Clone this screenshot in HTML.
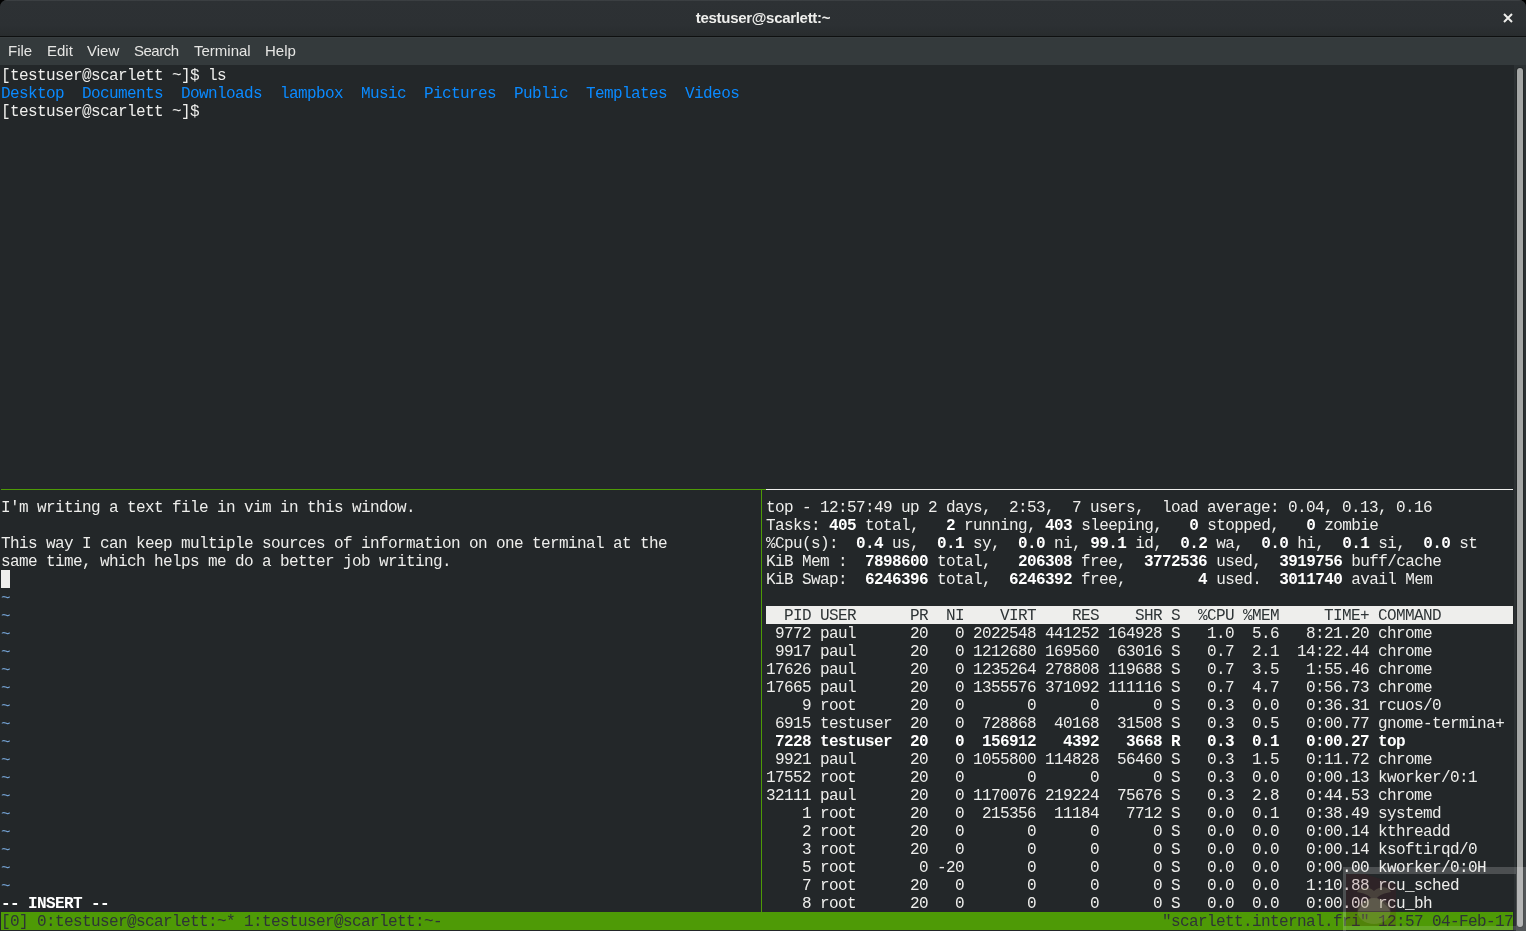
<!DOCTYPE html>
<html><head><meta charset="utf-8"><title>testuser@scarlett:~</title>
<style>
html,body{margin:0;padding:0;width:1526px;height:931px;overflow:hidden;background:#000;}
#win{will-change:transform;position:absolute;left:0;top:0;width:1526px;height:931px;background:#232729;border-radius:7px 7px 0 0;overflow:hidden}
#title{position:absolute;left:0;top:0;width:1526px;height:36px;background:linear-gradient(to bottom,#2d3134 0%,#2c3033 70%,#282c2e 100%);box-shadow:inset 0 1px rgba(255,255,255,0.07)}
#ttext{position:absolute;left:0;top:0;width:1526px;height:36px;font:bold 15px/36px "Liberation Sans",sans-serif;letter-spacing:-0.3px;text-align:center;color:#eeeeec}
#close{position:absolute;left:1501px;top:11px;width:14px;height:14px}
#tline{position:absolute;left:0;top:36px;width:1526px;height:1px;background:#0e1010}
#menu{position:absolute;left:0;top:37px;width:1526px;height:28px;background:#343a3c;box-shadow:inset 0 1px rgba(255,255,255,0.025)}
.m{position:absolute;top:0;height:28px;font:15px/28px "Liberation Sans",sans-serif;color:#e6e6e4}
#term{position:absolute;left:0;top:65px;width:1514px;height:866px;background:#232729}
#sb{position:absolute;left:1514px;top:65px;width:12px;height:866px;background:#2c3133}
#slider{position:absolute;left:1517px;top:68px;width:6px;height:859px;background:#a4a6a5;border-radius:3px;box-shadow:0 0 0 1px rgba(0,0,0,0.2)}
.r{position:absolute;height:17px;padding-top:1px;font:16px/18px "Liberation Mono",monospace;letter-spacing:-0.6px;white-space:pre;color:#eeeeec}
.r b,.bd{font-weight:bold;color:#ffffff}
.b{color:#0a8aff}
.tl{color:#729fcf;margin-top:1px}
.inv{background:#eeeeec;color:#2e3436}
.st{color:#2e3436}
#status{position:absolute;left:1px;top:912px;width:1512px;height:18px;background:#4e9a06}
#hl{position:absolute;left:1px;top:489px;width:765px;height:1px;background:#4e9a06}
#hr{position:absolute;left:766px;top:489px;width:747px;height:1px;background:#eeeeec}
#vl{position:absolute;left:761px;top:489px;width:1px;height:423px;background:#4e9a06}
#cur{position:absolute;left:1px;top:570px;width:9px;height:18px;background:#eeeeec}
#ov{position:absolute;left:1343px;top:867px;width:183px;height:64px;border-style:solid;border-color:rgba(255,255,255,0.19);border-width:7px 10px 1px 3px;box-sizing:border-box;border-bottom:0}
#ovb{position:absolute;left:1346px;top:926px;width:170px;height:4px;background:rgba(255,255,255,0.13)}
#logo{position:absolute;left:1340px;top:866px;width:60px;height:65px}

</style></head><body>
<div id="win">
<div id="title"><div id="ttext">testuser@scarlett:~</div>
<svg id="close" viewBox="0 0 14 14"><path d="M3 3L11 11M11 3L3 11" stroke="#eeeeec" stroke-width="2" stroke-linecap="butt"/></svg>
</div>
<div id="tline"></div>
<div id="menu">
<div class="m" style="left:8px">File</div>
<div class="m" style="left:47px">Edit</div>
<div class="m" style="left:87px">View</div>
<div class="m" style="left:134px;letter-spacing:-0.5px">Search</div>
<div class="m" style="left:194px">Terminal</div>
<div class="m" style="left:265px">Help</div>
</div>
<div id="term"></div>
<div id="sb"></div><div id="slider"></div>
<div id="status"></div>
<div id="hl"></div><div id="hr"></div><div id="vl"></div>
<div id="cur"></div>
<div class="r t" style="top:66px;left:1px">[testuser@scarlett ~]$ ls</div>
<div class="r b" style="top:84px;left:1px">Desktop  Documents  Downloads  lampbox  Music  Pictures  Public  Templates  Videos</div>
<div class="r t" style="top:102px;left:1px">[testuser@scarlett ~]$ </div>
<div class="r t" style="top:498px;left:1px">I'm writing a text file in vim in this window.</div>
<div class="r t" style="top:534px;left:1px">This way I can keep multiple sources of information on one terminal at the</div>
<div class="r t" style="top:552px;left:1px">same time, which helps me do a better job writing.</div>
<div class="r tl" style="top:588px;left:1px">~</div>
<div class="r tl" style="top:606px;left:1px">~</div>
<div class="r tl" style="top:624px;left:1px">~</div>
<div class="r tl" style="top:642px;left:1px">~</div>
<div class="r tl" style="top:660px;left:1px">~</div>
<div class="r tl" style="top:678px;left:1px">~</div>
<div class="r tl" style="top:696px;left:1px">~</div>
<div class="r tl" style="top:714px;left:1px">~</div>
<div class="r tl" style="top:732px;left:1px">~</div>
<div class="r tl" style="top:750px;left:1px">~</div>
<div class="r tl" style="top:768px;left:1px">~</div>
<div class="r tl" style="top:786px;left:1px">~</div>
<div class="r tl" style="top:804px;left:1px">~</div>
<div class="r tl" style="top:822px;left:1px">~</div>
<div class="r tl" style="top:840px;left:1px">~</div>
<div class="r tl" style="top:858px;left:1px">~</div>
<div class="r tl" style="top:876px;left:1px">~</div>
<div class="r bd" style="top:894px;left:1px">-- INSERT --</div>
<div class="r t" style="top:498px;left:766px">top - 12:57:49 up 2 days,  2:53,  7 users,  load average: 0.04, 0.13, 0.16</div>
<div class="r t" style="top:516px;left:766px">Tasks: <b>405</b> total,   <b>2</b> running, <b>403</b> sleeping,   <b>0</b> stopped,   <b>0</b> zombie</div>
<div class="r t" style="top:534px;left:766px">%Cpu(s):  <b>0.4</b> us,  <b>0.1</b> sy,  <b>0.0</b> ni, <b>99.1</b> id,  <b>0.2</b> wa,  <b>0.0</b> hi,  <b>0.1</b> si,  <b>0.0</b> st</div>
<div class="r t" style="top:552px;left:766px">KiB Mem :  <b>7898600</b> total,   <b>206308</b> free,  <b>3772536</b> used,  <b>3919756</b> buff/cache</div>
<div class="r t" style="top:570px;left:766px">KiB Swap:  <b>6246396</b> total,  <b>6246392</b> free,        <b>4</b> used.  <b>3011740</b> avail Mem</div>
<div class="r inv" style="top:606px;left:766px">  PID USER      PR  NI    VIRT    RES    SHR S  %CPU %MEM     TIME+ COMMAND        </div>
<div class="r t" style="top:624px;left:766px"> 9772 paul      20   0 2022548 441252 164928 S   1.0  5.6   8:21.20 chrome</div>
<div class="r t" style="top:642px;left:766px"> 9917 paul      20   0 1212680 169560  63016 S   0.7  2.1  14:22.44 chrome</div>
<div class="r t" style="top:660px;left:766px">17626 paul      20   0 1235264 278808 119688 S   0.7  3.5   1:55.46 chrome</div>
<div class="r t" style="top:678px;left:766px">17665 paul      20   0 1355576 371092 111116 S   0.7  4.7   0:56.73 chrome</div>
<div class="r t" style="top:696px;left:766px">    9 root      20   0       0      0      0 S   0.3  0.0   0:36.31 rcuos/0</div>
<div class="r t" style="top:714px;left:766px"> 6915 testuser  20   0  728868  40168  31508 S   0.3  0.5   0:00.77 gnome-termina+</div>
<div class="r bd" style="top:732px;left:766px"> 7228 testuser  20   0  156912   4392   3668 R   0.3  0.1   0:00.27 top</div>
<div class="r t" style="top:750px;left:766px"> 9921 paul      20   0 1055800 114828  56460 S   0.3  1.5   0:11.72 chrome</div>
<div class="r t" style="top:768px;left:766px">17552 root      20   0       0      0      0 S   0.3  0.0   0:00.13 kworker/0:1</div>
<div class="r t" style="top:786px;left:766px">32111 paul      20   0 1170076 219224  75676 S   0.3  2.8   0:44.53 chrome</div>
<div class="r t" style="top:804px;left:766px">    1 root      20   0  215356  11184   7712 S   0.0  0.1   0:38.49 systemd</div>
<div class="r t" style="top:822px;left:766px">    2 root      20   0       0      0      0 S   0.0  0.0   0:00.14 kthreadd</div>
<div class="r t" style="top:840px;left:766px">    3 root      20   0       0      0      0 S   0.0  0.0   0:00.14 ksoftirqd/0</div>
<div class="r t" style="top:858px;left:766px">    5 root       0 -20       0      0      0 S   0.0  0.0   0:00.00 kworker/0:0H</div>
<div class="r t" style="top:876px;left:766px">    7 root      20   0       0      0      0 S   0.0  0.0   1:10.88 rcu_sched</div>
<div class="r t" style="top:894px;left:766px">    8 root      20   0       0      0      0 S   0.0  0.0   0:00.00 rcu_bh</div>
<div class="r st" style="top:912px;left:1px">[0] 0:testuser@scarlett:~* 1:testuser@scarlett:~-</div>
<div class="r st" style="top:912px;left:1162px">"scarlett.internal.fri" 12:57 04-Feb-17</div>
<svg id="logo" viewBox="0 0 60 65"><polygon points="6,8 25,8 56,18 56,60 6,60" fill="rgba(100,20,30,0.17)"/><g fill="rgba(180,185,140,0.2)"><ellipse cx="34" cy="45" rx="16.5" ry="13"/><path d="M17,26 C20,20 28,20 34,25 C40,20 48,20 51,26 C45,27 39,29 37,32 C42,36 48,40 50,45 L18,45 C20,40 26,36 31,32 C29,29 23,27 17,26Z"/></g></svg><div id="ov"></div><div id="ovb"></div>
</div>

</body></html>
